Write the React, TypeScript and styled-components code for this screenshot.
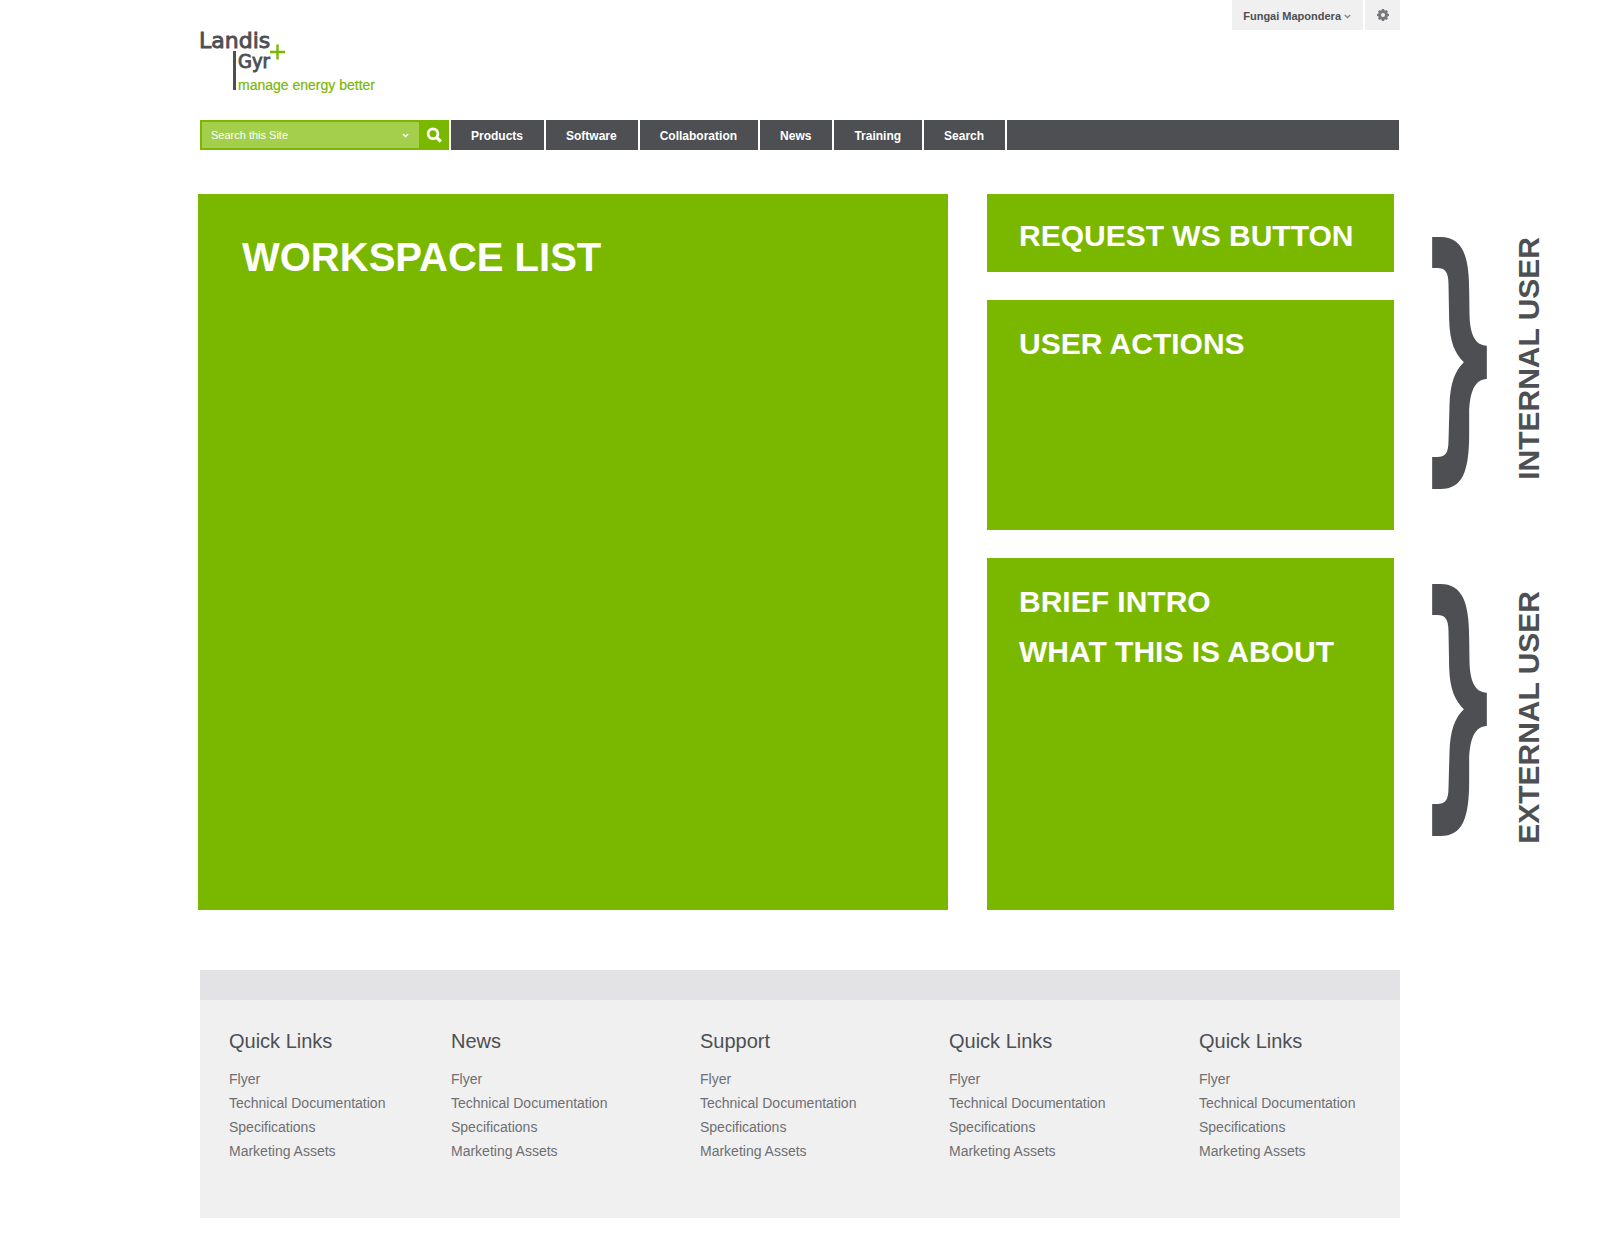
import React from "react";
import styled, { createGlobalStyle } from "styled-components";

const green = "#7ab800";
const slate = "#4d4f53";

const GlobalStyle = createGlobalStyle`
  *, *::before, *::after { box-sizing: border-box; }
  body {
    margin: 0;
    background: #fff;
    color: ${slate};
    font-family: "Liberation Sans", Arial, sans-serif;
  }
  h1, h2, h3, p, ul { margin: 0; padding: 0; }
  ul { list-style: none; }
  a { color: inherit; text-decoration: none; }
  button, input { font: inherit; color: inherit; border: 0; border-radius: 0; margin: 0; }
  button { cursor: pointer; }
  svg { display: block; flex: none; }
`;

const Shell = styled.div`
  margin: 0 200px;
`;

const UserBar = styled.div`
  display: flex;
  justify-content: flex-end;
  gap: 2px;
`;

const UserButton = styled.button<{ $iconOnly?: boolean }>`
  display: flex;
  align-items: center;
  gap: 3px;
  height: 30px;
  padding: ${(p) => (p.$iconOnly ? "0 11px 0 12px" : "2px 12px 0 11px")};
  background: #f0f0f0;
  color: ${slate};
  font-size: 11px;
  font-weight: 700;
  line-height: 16px;
  white-space: nowrap;
`;

const LogoLink = styled.a`
  display: inline-block;
  vertical-align: top;
  margin-bottom: 26px;
`;

const Wordmark = styled.text`
  font-family: "DejaVu Sans", sans-serif;
  font-size: 22px;
  fill: ${slate};
  stroke: ${slate};
  stroke-width: 0.9px;
`;

const WordmarkNarrow = styled(Wordmark)`
  font-family: "DejaVu Sans Condensed", "DejaVu Sans", sans-serif;
  font-size: 20px;
`;

const Tagline = styled.text`
  font-family: "Liberation Sans", Arial, sans-serif;
  font-size: 14px;
  fill: ${green};
  stroke: ${green};
  stroke-width: 0.2px;
`;

const NavBar = styled.nav`
  display: flex;
  gap: 2px;
  height: 30px;
  padding-right: 1px;
`;

const SearchForm = styled.form`
  display: flex;
  flex: none;
  width: 249px;
  padding: 2px 0 2px 2px;
  background: ${green};
  color: #fff;
`;

const SearchField = styled.div`
  display: flex;
  flex: 1;
  min-width: 0;
  background: #a3cf4d;
`;

const SearchInput = styled.input`
  flex: 1;
  min-width: 0;
  padding: 0 0 0 9px;
  background: transparent;
  font-size: 11px;
  outline-offset: -2px;
  &::placeholder { color: #fff; opacity: 1; }
`;

const ScopeButton = styled.button`
  display: flex;
  align-items: center;
  padding: 1px 10px 0 6px;
  background: transparent;
`;

const SearchButton = styled.button`
  display: flex;
  align-items: center;
  justify-content: center;
  width: 30px;
  padding: 0;
  background: transparent;
`;

const NavLink = styled.a`
  flex: none;
  padding: 2px 21px 0 20px;
  background: ${slate};
  color: #fff;
  font-size: 12px;
  font-weight: 700;
  line-height: 28px;
`;

const NavFill = styled.div`
  flex: 1;
  background: ${slate};
`;

const Main = styled.main`
  display: grid;
  grid-template-columns: minmax(0, 750fr) minmax(0, 407fr) auto;
  column-gap: 39px;
  padding: 44px 52px 60px 198px;
`;

const WorkspacePanel = styled.section`
  padding: 38px 44px;
  background: ${green};
  color: #fff;
`;

const WorkspaceTitle = styled.h1`
  font-size: 40px;
  line-height: 50px;
`;

const Sidebar = styled.div`
  display: grid;
  grid-template-rows: minmax(78px, auto) minmax(230px, auto) minmax(352px, auto);
  row-gap: 28px;
`;

const SidePanel = styled.section<{ $compact?: boolean }>`
  padding: ${(p) => (p.$compact ? "17px 32px 11px" : "19px 32px")};
  background: ${green};
  color: #fff;
`;

const SideTitle = styled.h2`
  font-size: 30px;
  line-height: 50px;
`;

const Notes = styled.div`
  display: grid;
  grid-template-rows: minmax(336px, auto) minmax(352px, auto);
  row-gap: 28px;
  margin-left: -1px;
`;

const Note = styled.div<{ $top: number }>`
  display: flex;
  align-items: flex-start;
  gap: 25px;
  padding: ${(p) => p.$top}px 2px 0 0;
`;

const NoteLabel = styled.p<{ $drop: number }>`
  margin-top: ${(p) => p.$drop}px;
  writing-mode: vertical-rl;
  transform: rotate(180deg);
  font-size: 30px;
  font-weight: 700;
  line-height: 34px;
  white-space: nowrap;
`;

const Footer = styled.footer`
  margin-bottom: 38px;
  border-top: 30px solid #e3e3e5;
  background: #f0f0f0;
`;

const FooterColumns = styled.div`
  display: grid;
  grid-template-columns: 222fr 249fr 249fr 250fr 201fr;
  padding: 29px 0 55px 29px;
`;

const FooterTitle = styled.h3`
  margin-bottom: 14px;
  font-size: 20px;
  font-weight: 400;
  line-height: 24px;
`;

const FooterItem = styled.li`
  font-size: 14px;
  line-height: 24px;
`;

const FooterLink = styled.a`
  color: #6d6f72;
`;

const Chevron = ({ color }: { color: string }) => (
  <svg width="7" height="5" viewBox="0 0 7 5" fill="none" aria-hidden="true">
    <path d="M0.8 1L3.5 3.6L6.2 1" stroke={color} strokeWidth="1.4" />
  </svg>
);

const Gear = () => (
  <svg width="12" height="12" viewBox="-6 -6 12 12" aria-hidden="true">
    <circle r="3.4" fill="none" stroke="#76787d" strokeWidth="2.8" />
    {[0, 45, 90, 135, 180, 225, 270, 315].map((a) => (
      <path key={a} transform={`rotate(${a})`} d="M-1.5 -4L-1.1 -6H1.1L1.5 -4Z" fill="#76787d" />
    ))}
  </svg>
);

const Magnifier = () => (
  <svg width="16" height="16" viewBox="0 0 16 16" fill="none" stroke="#fff" aria-hidden="true">
    <circle cx="7" cy="6.8" r="4.9" strokeWidth="2.8" />
    <path d="M10.6 10.4L14.8 14.6" strokeWidth="3.2" />
  </svg>
);

const Logo = () => (
  <svg width="178" height="64" viewBox="0 0 178 64" overflow="visible" role="img" aria-label="Landis Gyr">
    <Wordmark x="-1" y="18">Landis</Wordmark>
    <WordmarkNarrow x="38" y="38">Gyr</WordmarkNarrow>
    <rect x="33" y="21" width="3" height="39" fill={slate} />
    <path d="M70 22H85M77.5 14.5V29.5" stroke={green} strokeWidth="2.4" />
    <Tagline x="38" y="60">manage energy better</Tagline>
  </svg>
);

const Brace = () => (
  <svg width="55" height="252" viewBox="0 0 164 756" aria-hidden="true">
    <path
      fill={slate}
      d="M0 0H25C90 0 111 55 111 160L112 232C113 290 128 326 164 326V426C128 427 112 465 111 530V590C111 700 92 756 25 756H0V660H15C38 660 49 650 49 612L52 504C54 440 68 402 95 376C68 350 53 315 51 250L49 142C49 104 38 93 15 93H0Z"
    />
  </svg>
);

const navItems = ["Products", "Software", "Collaboration", "News", "Training", "Search"];
const footerTitles = ["Quick Links", "News", "Support", "Quick Links", "Quick Links"];
const footerItems = ["Flyer", "Technical Documentation", "Specifications", "Marketing Assets"];

export default function App() {
  return (
    <>
      <GlobalStyle />
      <Shell as="header">
        <UserBar>
          <UserButton type="button">
            Fungai Mapondera
            <Chevron color="#85878b" />
          </UserButton>
          <UserButton type="button" aria-label="Settings" $iconOnly>
            <Gear />
          </UserButton>
        </UserBar>
        <LogoLink href="#">
          <Logo />
        </LogoLink>
        <NavBar>
          <SearchForm role="search" onSubmit={(e) => e.preventDefault()}>
            <SearchField>
              <SearchInput type="text" aria-label="Search this Site" placeholder="Search this Site" />
              <ScopeButton type="button" aria-label="Search scope">
                <Chevron color="#fff" />
              </ScopeButton>
            </SearchField>
            <SearchButton type="submit" aria-label="Search">
              <Magnifier />
            </SearchButton>
          </SearchForm>
          {navItems.map((item) => (
            <NavLink key={item} href="#">{item}</NavLink>
          ))}
          <NavFill />
        </NavBar>
      </Shell>

      <Main>
        <WorkspacePanel>
          <WorkspaceTitle>WORKSPACE LIST</WorkspaceTitle>
        </WorkspacePanel>
        <Sidebar>
          <SidePanel $compact>
            <SideTitle>REQUEST WS BUTTON</SideTitle>
          </SidePanel>
          <SidePanel>
            <SideTitle>USER ACTIONS</SideTitle>
          </SidePanel>
          <SidePanel>
            <SideTitle>BRIEF INTRO</SideTitle>
            <SideTitle>WHAT THIS IS ABOUT</SideTitle>
          </SidePanel>
        </Sidebar>
        <Notes>
          <Note $top={43}>
            <Brace />
            <NoteLabel $drop={0}>INTERNAL USER</NoteLabel>
          </Note>
          <Note $top={26}>
            <Brace />
            <NoteLabel $drop={7}>EXTERNAL USER</NoteLabel>
          </Note>
        </Notes>
      </Main>

      <Shell>
        <Footer>
          <FooterColumns>
            {footerTitles.map((title, i) => (
              <div key={i}>
                <FooterTitle>{title}</FooterTitle>
                <ul>
                  {footerItems.map((item) => (
                    <FooterItem key={item}>
                      <FooterLink href="#">{item}</FooterLink>
                    </FooterItem>
                  ))}
                </ul>
              </div>
            ))}
          </FooterColumns>
        </Footer>
      </Shell>
    </>
  );
}
